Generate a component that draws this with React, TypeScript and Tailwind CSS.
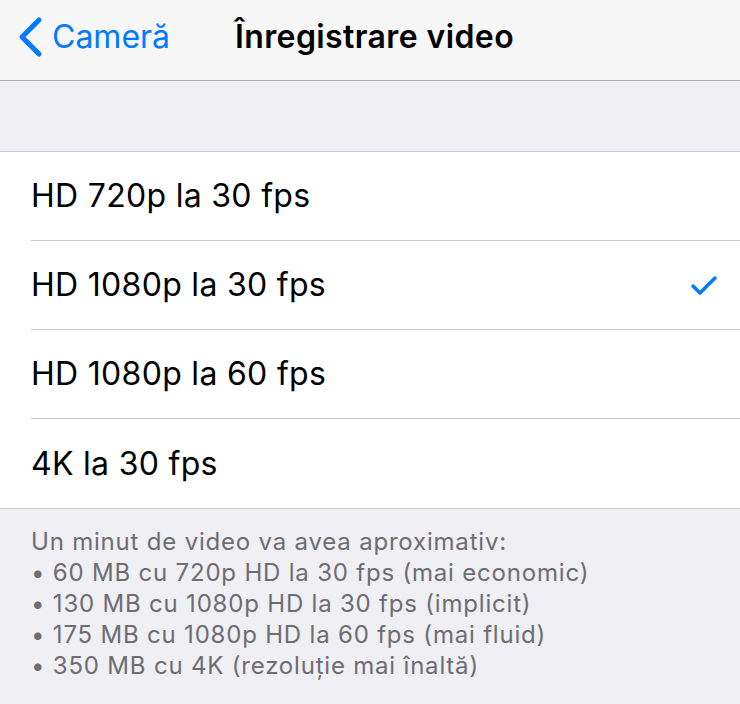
import React from "react";

const rows = [
  { label: "HD 720p la 30 fps", checked: false },
  { label: "HD 1080p la 30 fps", checked: true },
  { label: "HD 1080p la 60 fps", checked: false },
  { label: "4K la 30 fps", checked: false },
];

const footer = [
  "Un minut de video va avea aproximativ:",
  "• 60 MB cu 720p HD la 30 fps (mai economic)",
  "• 130 MB cu 1080p HD la 30 fps (implicit)",
  "• 175 MB cu 1080p HD la 60 fps (mai fluid)",
  "• 350 MB cu 4K (rezoluție mai înaltă)",
];

export default function App() {
  return (
    <div
      className="w-[740px] h-[704px] overflow-hidden bg-[#efeff4]"
      style={{ fontFamily: 'Inter, "Liberation Sans", Arial, sans-serif' }}
    >
      <div className="relative h-[81px] bg-[#f7f7f7] border-b border-[#b2b2b2] flex items-center pb-[7px]">
        <div className="flex items-center pl-[17px] text-[#007aff]">
          <svg width="26" height="42" viewBox="0 0 26 42" className="mr-[9px]">
            <path d="M22 4 L5 21 L22 38" fill="none" stroke="#007aff" strokeWidth="5" strokeLinecap="round" strokeLinejoin="round" />
          </svg>
          <span className="text-[32px]">Cameră</span>
        </div>
        <div className="absolute left-0 right-0 top-0 h-[73px] flex items-center justify-center pointer-events-none">
          <span className="text-[32px] font-semibold tracking-[0.4px] text-black ml-[9px]">Înregistrare video</span>
        </div>
      </div>
      <div className="h-[70px]" />
      <div className="bg-white border-t border-b border-[#c8c7cc]">
        {rows.map((r, i) => (
          <div key={r.label} className="pl-[31px]">
            <div
              className={
                "h-[89px] flex items-center pr-[22px] " +
                (i < rows.length - 1 ? "border-b border-[#c8c7cc]" : "")
              }
            >
              <span className="flex-1 text-[32px] tracking-[0.3px] text-black">{r.label}</span>
              {r.checked && (
                <svg width="28" height="22" viewBox="0 0 28 22">
                  <path d="M3 12 L10 19 L25 4" fill="none" stroke="#007aff" strokeWidth="3.5" strokeLinecap="round" strokeLinejoin="round" />
                </svg>
              )}
            </div>
          </div>
        ))}
      </div>
      <div className="pl-[31px] pt-[17px] text-[24px] tracking-[0.8px] leading-[31px] text-[#6d6d72]">
        {footer.map((l) => (
          <div key={l}>{l}</div>
        ))}
      </div>
    </div>
  );
}
